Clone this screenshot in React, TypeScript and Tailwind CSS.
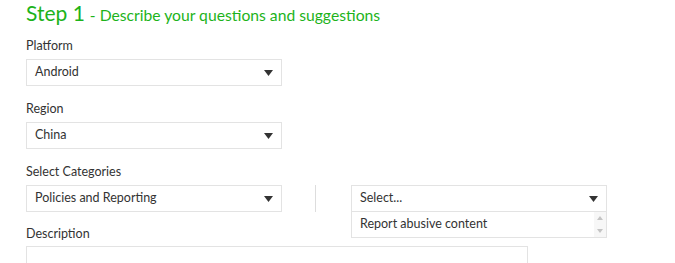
import { ReactNode } from 'react';

const font = { fontFamily: 'Lato, "Noto Sans", sans-serif' };

function Caret() {
  return (
    <svg width="9" height="6" viewBox="0 0 9 6" aria-hidden="true">
      <path d="M0 0 L9 0 L4.5 6 Z" fill="#333" />
    </svg>
  );
}

function SelectBox({ value }: { value: string }) {
  return (
    <div className="flex h-[27px] w-[256px] items-center justify-between border border-[#e3e3e3] bg-white pl-[8px] pr-[8px]">
      <span className="text-[12.5px] text-[#333]">{value}</span>
      <Caret />
    </div>
  );
}

function Field({ label, children }: { label: string; children: ReactNode }) {
  return (
    <div className="mb-[14px]">
      <p className="mb-[4px] h-[18px] text-[12.5px] leading-[18px] text-[#333]">{label}</p>
      {children}
    </div>
  );
}

export default function App() {
  return (
    <div className="h-[263px] w-[675px] overflow-hidden bg-white pl-[26px]" style={font}>
      <h1 className="flex h-[28px] items-baseline pt-[1px] text-[#1db31b]">
        <span className="text-[21px] leading-[24px]">Step 1</span>
        <span className="ml-[5px] text-[15.7px]">- Describe your questions and suggestions</span>
      </h1>

      <div className="mt-[9px]">
        <Field label="Platform">
          <SelectBox value="Android" />
        </Field>
        <Field label="Region">
          <SelectBox value="China" />
        </Field>
        <Field label="Select Categories">
          <div className="flex items-center">
            <SelectBox value="Policies and Reporting" />
            <div className="ml-[33px] h-[27px] w-px bg-[#ddd]" />
            <div className="relative ml-[35px]">
              <SelectBox value="Select..." />
              {/* open dropdown list */}
              <div className="absolute left-0 top-[26px] z-10 flex h-[27px] w-[256px] items-center justify-between border border-[#e3e3e3] bg-white pl-[8px]">
                <span className="text-[12.5px] text-[#333]">Report abusive content</span>
                <div className="flex h-full w-[12px] flex-col items-center justify-between bg-[#f7f7f7] py-[4px]">
                  <svg width="6" height="4" viewBox="0 0 6 4"><path d="M0 4 L6 4 L3 0 Z" fill="#c4c4c4" /></svg>
                  <svg width="6" height="4" viewBox="0 0 6 4"><path d="M0 0 L6 0 L3 4 Z" fill="#c4c4c4" /></svg>
                </div>
              </div>
            </div>
          </div>
        </Field>
        <p className="-mt-[1px] mb-[3px] h-[18px] text-[12.5px] leading-[18px] text-[#333]">Description</p>
        <div className="h-[40px] w-[502px] border border-[#e3e3e3] bg-white" />
      </div>
    </div>
  );
}
